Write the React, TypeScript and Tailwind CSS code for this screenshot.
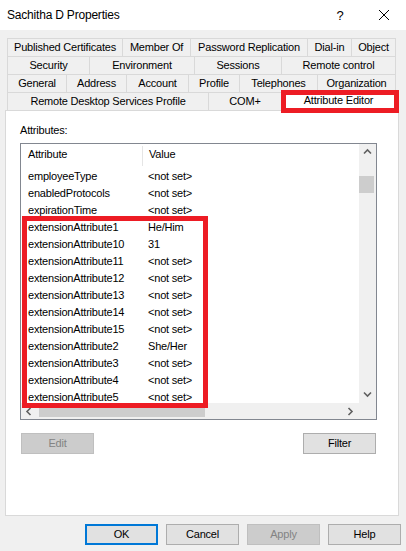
import React from 'react';

const tabRows: { label: string; w: number; active?: boolean }[][] = [
  [
    { label: 'Published Certificates', w: 116 },
    { label: 'Member Of', w: 68 },
    { label: 'Password Replication', w: 117 },
    { label: 'Dial-in', w: 44 },
    { label: 'Object', w: 44 },
  ],
  [
    { label: 'Security', w: 83 },
    { label: 'Environment', w: 105 },
    { label: 'Sessions', w: 87 },
    { label: 'Remote control', w: 114 },
  ],
  [
    { label: 'General', w: 60 },
    { label: 'Address', w: 60 },
    { label: 'Account', w: 62 },
    { label: 'Profile', w: 51 },
    { label: 'Telephones', w: 78 },
    { label: 'Organization', w: 78 },
  ],
  [
    { label: 'Remote Desktop Services Profile', w: 202 },
    { label: 'COM+', w: 73 },
    { label: 'Attribute Editor', w: 114, active: true },
  ],
];

const attributes: [string, string][] = [
  ['employeeType', '<not set>'],
  ['enabledProtocols', '<not set>'],
  ['expirationTime', '<not set>'],
  ['extensionAttribute1', 'He/Him'],
  ['extensionAttribute10', '31'],
  ['extensionAttribute11', '<not set>'],
  ['extensionAttribute12', '<not set>'],
  ['extensionAttribute13', '<not set>'],
  ['extensionAttribute14', '<not set>'],
  ['extensionAttribute15', '<not set>'],
  ['extensionAttribute2', 'She/Her'],
  ['extensionAttribute3', '<not set>'],
  ['extensionAttribute4', '<not set>'],
  ['extensionAttribute5', '<not set>'],
];

function Chevron({ dir }: { dir: 'up' | 'down' | 'left' | 'right' }) {
  const pts = {
    up: '1,5.5 4.5,2 8,5.5',
    down: '1,2.5 4.5,6 8,2.5',
    left: '5.5,1 2,4.5 5.5,8',
    right: '2.5,1 6,4.5 2.5,8',
  }[dir];
  return (
    <svg width="9" height="9" viewBox="0 0 9 9">
      <polyline points={pts} fill="none" stroke="#606060" strokeWidth="1.6" />
    </svg>
  );
}

function Button({ label, disabled, primary }: { label: string; disabled?: boolean; primary?: boolean }) {
  return (
    <div
      className={`w-[73px] h-[21px] flex items-center justify-center ${
        disabled
          ? 'bg-[#cccccc] border border-[#bfbfbf] text-[#838383]'
          : primary
          ? 'bg-[#e1e1e1] border-2 border-[#0078d7]'
          : 'bg-[#e1e1e1] border border-[#adadad]'
      }`}
    >
      {label}
    </div>
  );
}

export default function App() {
  return (
    <div className="w-[406px] h-[551px] bg-[#f0f0f0] overflow-hidden text-[11px] leading-[13px] tracking-[-0.2px] text-black font-['Liberation_Sans',Arial,sans-serif]">
      {/* Title bar */}
      <div className="h-[30px] bg-white flex items-center pl-[7px]">
        <span className="text-[12px] tracking-[-0.2px]">Sachitha D Properties</span>
        <div className="flex-1" />
        <div className="w-[44px] flex justify-center text-[13px]">?</div>
        <div className="w-[44px] flex justify-center">
          <svg width="12" height="12" viewBox="0 0 12 12">
            <path d="M1 1 L11 11 M11 1 L1 11" stroke="#000" strokeWidth="1" />
          </svg>
        </div>
      </div>

      {/* Tabs */}
      <div className="mt-[8px] ml-[7px] flex flex-col">
        {tabRows.map((row, ri) => (
          <div key={ri} className="flex h-[18px]">
            {row.map((t, i) => (
              <div
                key={t.label}
                style={{ width: t.w }}
                className={`relative h-full flex items-center justify-center border-t border-r border-[#d9d9d9] ${
                  i === 0 ? 'border-l' : ''
                } ${t.active ? 'bg-white pb-[2px]' : 'bg-[#f0f0f0]'}`}
              >
                {t.label}
                {t.active && (
                  <div className="absolute left-[-1px] top-[-3px] w-[118px] h-[23px] border-[5px] border-[#ed1c24] z-10" />
                )}
              </div>
            ))}
          </div>
        ))}
      </div>

      {/* Panel */}
      <div className="ml-[5px] w-[394px] h-[406px] bg-white border border-[#d9d9d9] flex flex-col">
        <div className="pt-[13px] pl-[14px]">Attributes:</div>
        <div className="relative mt-[6px] ml-[14px] w-[357px] h-[277px] border border-[#828790] flex flex-col">
          <div className="flex h-[259px]">
            <div className="flex-1 overflow-hidden">
              <div className="flex h-[24px] pb-[4px] items-center">
                <div className="w-[121px] pl-[7px] h-full flex items-center">Attribute</div>
                <div className="w-px h-[20px] mt-[4px] bg-[#e5e5e5]" />
                <div className="pl-[6px]">Value</div>
              </div>
              {attributes.map(([a, v]) => (
                <div key={a} className="flex h-[17px] items-center">
                  <div className="w-[127px] pl-[7px]">{a}</div>
                  <div>{v}</div>
                </div>
              ))}
            </div>
            <div className="w-[17px] bg-[#f0f0f0] flex flex-col items-center">
              <div className="h-[17px] flex items-center justify-center">
                <Chevron dir="up" />
              </div>
              <div className="mt-[15px] w-[15px] h-[17px] bg-[#cdcdcd] self-start" />
              <div className="flex-1" />
              <div className="h-[17px] flex items-center justify-center">
                <Chevron dir="down" />
              </div>
            </div>
          </div>
          <div className="flex h-[16px] bg-[#f0f0f0] items-center">
            <div className="w-[17px] flex justify-center">
              <Chevron dir="left" />
            </div>
            <div className="w-[166px] h-[12px] ml-px bg-[#cdcdcd]" />
            <div className="flex-1" />
            <div className="w-[17px] flex justify-center">
              <Chevron dir="right" />
            </div>
            <div className="w-[17px]" />
          </div>
          <div className="absolute left-[1px] top-[72px] w-[186px] h-[192px] border-[5px] border-[#ed1c24]" />
        </div>
        <div className="mt-[13px] pl-[15px] pr-[22px] flex justify-between">
          <Button label="Edit" disabled />
          <Button label="Filter" />
        </div>
      </div>

      {/* Footer buttons */}
      <div className="mt-[8px] pr-[5px] flex justify-end gap-[8px]">
        <Button label="OK" primary />
        <Button label="Cancel" />
        <Button label="Apply" disabled />
        <Button label="Help" />
      </div>
    </div>
  );
}
